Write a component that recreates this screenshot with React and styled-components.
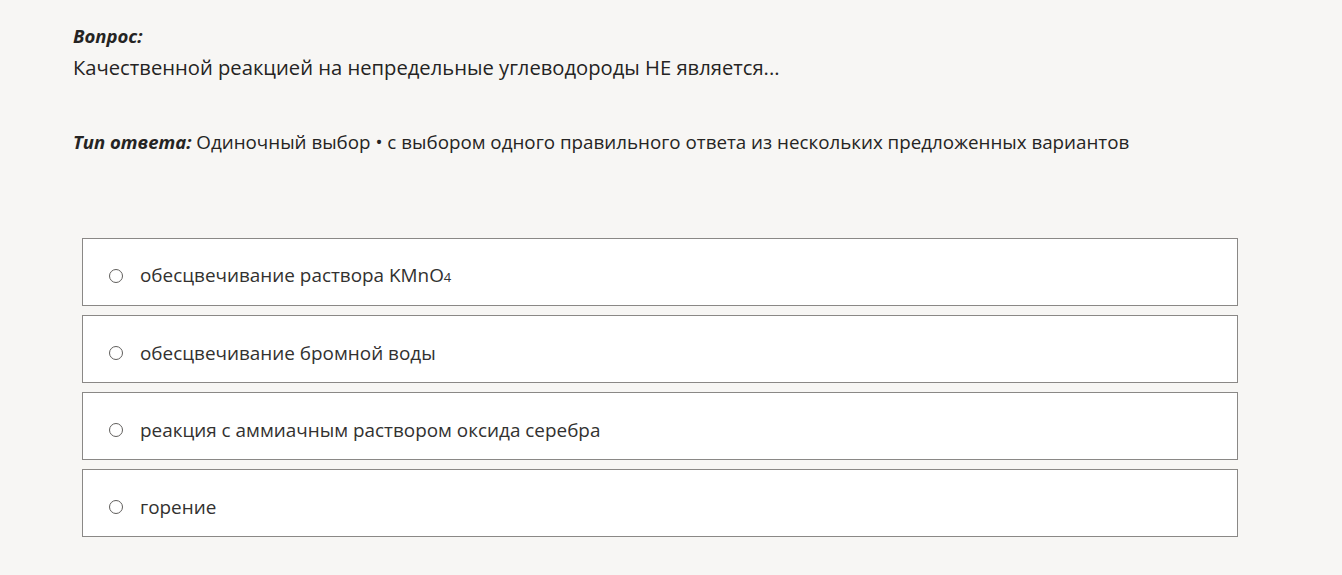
import React from "react";
import styled, { createGlobalStyle } from "styled-components";

const Global = createGlobalStyle`
  html, body {
    margin: 0;
    padding: 0;
    background: #f7f6f4;
  }
  body {
    font-family: "Open Sans", "Noto Sans", sans-serif;
    color: #252423;
  }
`;

const Page = styled.div`
  padding: 24px 104px 0 73px;
`;

const Label = styled.div`
  font-size: 18.5px;
  font-weight: 700;
  font-style: italic;
  line-height: 24px;
`;

const Question = styled.div`
  margin-top: 6px;
  font-size: 20.2px;
  line-height: 26px;
`;

const TypeLine = styled.div`
  margin-top: 50px;
  font-size: 18.8px;
  line-height: 24px;
`;

const Options = styled.div`
  margin: 84px 0 0 9px;
  display: flex;
  flex-direction: column;
  gap: 9px;
`;

const Option = styled.div`
  display: flex;
  align-items: center;
  box-sizing: border-box;
  height: 68px;
  background: #fff;
  border: 1px solid #8a8886;
  padding: 8px 0 0 26px;
  gap: 17px;
`;

const Radio = styled.span`
  width: 12px;
  height: 12px;
  border-radius: 50%;
  border: 1px solid #605e5c;
  flex-shrink: 0;
`;

const OptionText = styled.span`
  font-size: 18.9px;
  line-height: 24px;
  color: #323130;
`;

const Sub = styled.span`
  font-size: 13px;
`;

const options = [
  <>обесцвечивание раствора KMnO<Sub>4</Sub></>,
  "обесцвечивание бромной воды",
  "реакция с аммиачным раствором оксида серебра",
  "горение",
];

function App() {
  return (
    <>
      <Global />
      <Page>
        <Label>Вопрос:</Label>
        <Question>Качественной реакцией на непредельные углеводороды НЕ является...</Question>
        <TypeLine>
          <Label as="span">Тип ответа:</Label> Одиночный выбор • с выбором одного правильного ответа из нескольких предложенных вариантов
        </TypeLine>
        <Options>
          {options.map((text, i) => (
            <Option key={i}>
              <Radio />
              <OptionText>{text}</OptionText>
            </Option>
          ))}
        </Options>
      </Page>
    </>
  );
}

export default App;
